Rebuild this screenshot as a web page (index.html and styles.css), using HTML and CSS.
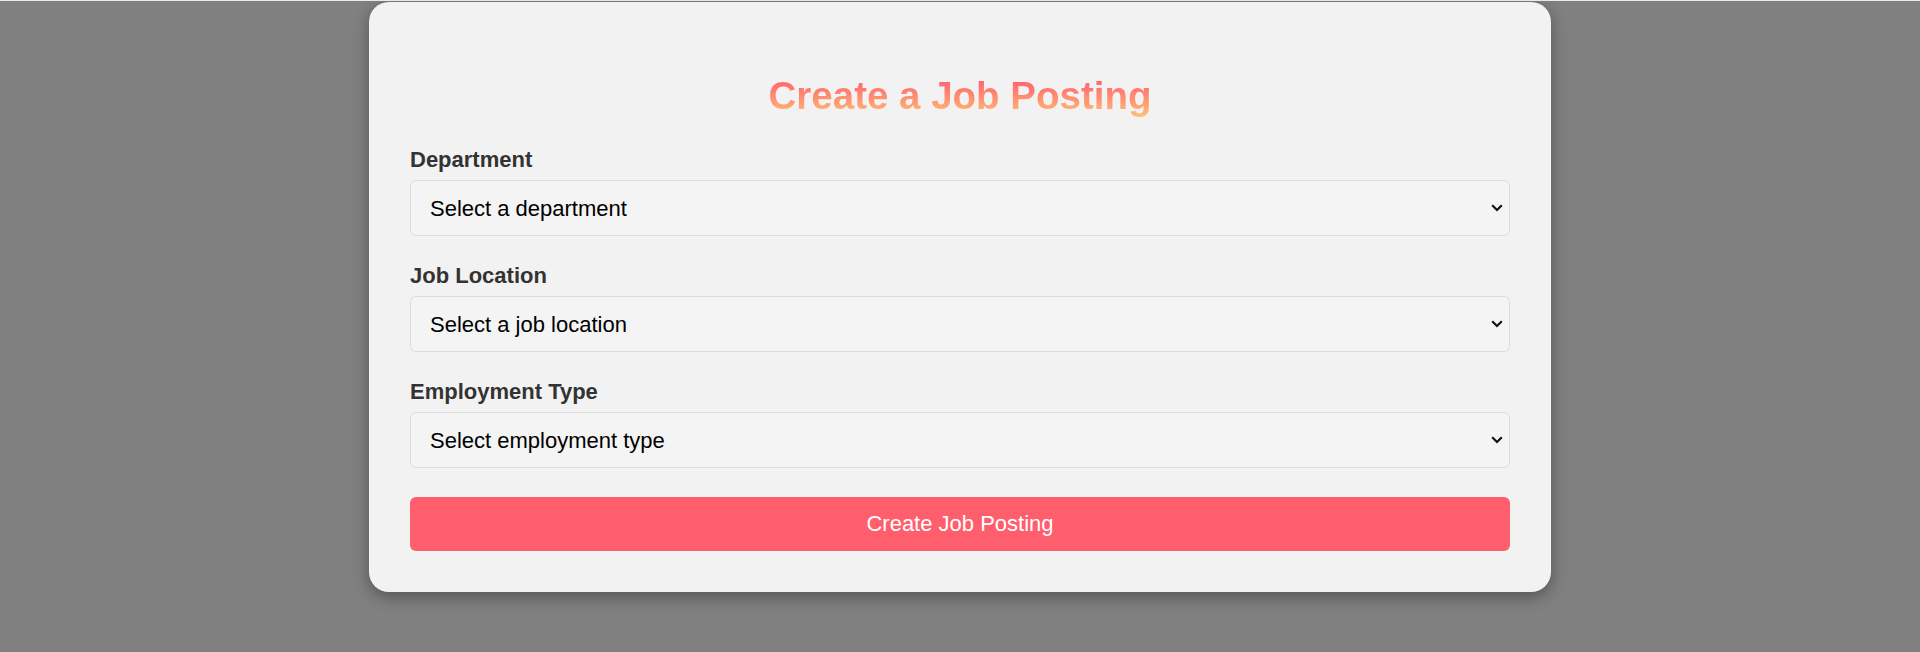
FILE: index.html
```html
<!DOCTYPE html>
<html lang="en">
<head>
<meta charset="utf-8">
<title>Create a Job Posting</title>
<link rel="stylesheet" href="styles.css">
</head>
<body>
<div class="card">
  <h1 class="title">Create a Job Posting</h1>
  <form class="form">
    <div class="field">
      <label class="label" for="dept">Department</label>
      <div class="select-wrap">
        <select class="select" id="dept">
          <option>Select a department</option>
        </select>
        <svg class="chevron" width="12" height="8" viewBox="0 0 12 8"><path d="M1.2 1.3 L6 6 L10.8 1.3" fill="none" stroke="#111" stroke-width="2.2"/></svg>
      </div>
    </div>
    <div class="field">
      <label class="label" for="loc">Job Location</label>
      <div class="select-wrap">
        <select class="select" id="loc">
          <option>Select a job location</option>
        </select>
        <svg class="chevron" width="12" height="8" viewBox="0 0 12 8"><path d="M1.2 1.3 L6 6 L10.8 1.3" fill="none" stroke="#111" stroke-width="2.2"/></svg>
      </div>
    </div>
    <div class="field">
      <label class="label" for="type">Employment Type</label>
      <div class="select-wrap">
        <select class="select" id="type">
          <option>Select employment type</option>
        </select>
        <svg class="chevron" width="12" height="8" viewBox="0 0 12 8"><path d="M1.2 1.3 L6 6 L10.8 1.3" fill="none" stroke="#111" stroke-width="2.2"/></svg>
      </div>
    </div>
    <button class="submit" type="button">Create Job Posting</button>
  </form>
</div>
</body>
</html>
```
FILE: styles.css
```css
* { box-sizing: border-box; }
html, body { margin: 0; padding: 0; }
body {
  background: #808080;
  border-top: 1px solid #e9e9e9;
  font-family: "Liberation Sans", Arial, sans-serif;
  min-height: 652px;
}
.card {
  width: 1182px;
  margin: 1px auto 0;
  background: #f2f2f2;
  border-radius: 20px;
  padding: 41px 41px 41px;
  box-shadow: 0 5px 16px rgba(0, 0, 0, 0.35);
}
.title {
  margin: 31px auto 29px;
  text-align: center;
  font-size: 38.5px;
  font-weight: bold;
  line-height: 44px;
  background: linear-gradient(to bottom, #ff6470 15%, #ffbd72 95%);
  -webkit-background-clip: text;
  background-clip: text;
  color: transparent;
  width: max-content;
}
.form { display: flex; flex-direction: column; }
.field { display: flex; flex-direction: column; margin-bottom: 27px; }
.label {
  font-size: 22px;
  font-weight: bold;
  color: #333;
  line-height: 26px;
  margin-bottom: 7px;
}
.select-wrap { position: relative; }
.select {
  appearance: none;
  -webkit-appearance: none;
  width: 100%;
  height: 56px;
  padding: 0 40px 0 19px;
  border: 1px solid #dcdcdc;
  border-radius: 6px;
  background: #f4f4f4;
  font-family: "Liberation Sans", Arial, sans-serif;
  font-size: 22px;
  color: #000;
  outline: none;
}
.chevron {
  position: absolute;
  right: 7px;
  top: 24px;
  pointer-events: none;
}
.submit {
  margin-top: 2px;
  height: 54px;
  border: none;
  border-radius: 6px;
  background: #ff5e6c;
  color: #fff;
  font-family: "Liberation Sans", Arial, sans-serif;
  font-size: 22px;
  cursor: pointer;
}
```
